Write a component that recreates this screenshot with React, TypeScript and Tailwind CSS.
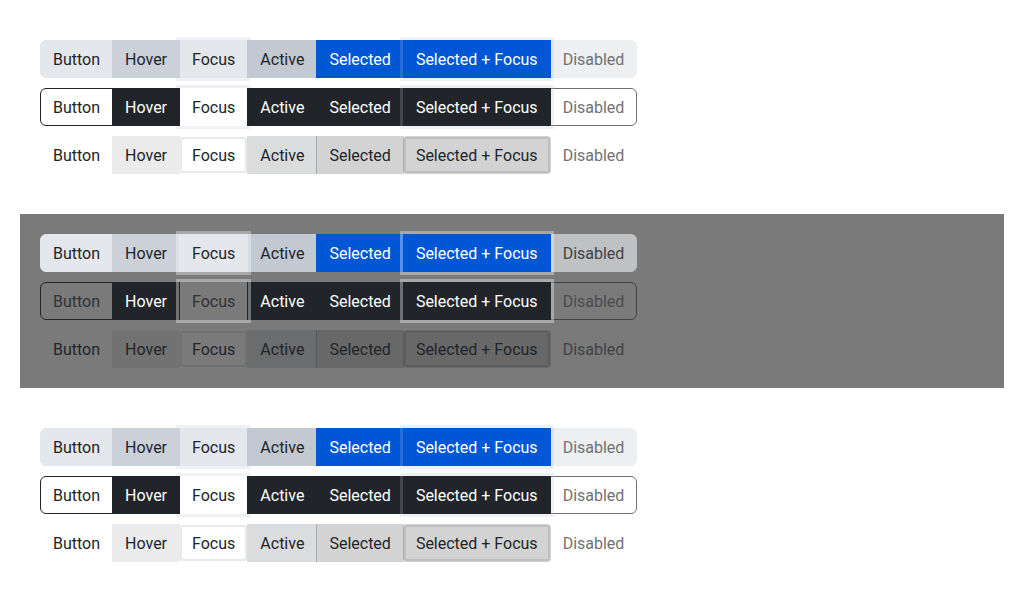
import React from 'react'

type Tone = 'light' | 'dark'

const labels = ['Button', 'Hover', 'Focus', 'Active', 'Selected', 'Selected + Focus', 'Disabled']

const base = 'border px-3 pt-[7px] pb-[5px] text-base leading-6 whitespace-nowrap -ml-px first:ml-0'

// filled row
const filled: Record<Tone, string[]> = {
  light: [
    'relative bg-[#e4e7eb] border-[#e4e7eb] text-[#212529] rounded-l-md',
    'relative bg-[#cbd0d9] border-[#cbd0d9] text-[#212529]',
    'bg-[#e4e7eb] border-[#e4e7eb] text-[#212529] shadow-[0_0_0_3px_rgba(180,190,205,0.22)]',
    'relative bg-[#c3c9d2] border-[#c3c9d2] text-[#212529]',
    'relative bg-[#0057d6] border-[#0057d6] text-white',
    'relative z-10 bg-[#0057d6] border-[#0057d6] text-white shadow-[0_0_0_3px_rgba(180,190,205,0.22)]',
    'relative bg-[#e4e7eb] border-[#e4e7eb] text-[#212529] opacity-65 rounded-r-md',
  ],
  dark: [
    'relative bg-[#e4e7eb] border-[#e4e7eb] text-[#212529] rounded-l-md',
    'relative bg-[#cbd0d9] border-[#cbd0d9] text-[#212529]',
    'relative z-10 bg-[#e4e7eb] border-[#e4e7eb] text-[#212529] shadow-[0_0_0_3px_rgba(255,255,255,0.35)]',
    'relative bg-[#c3c9d2] border-[#c3c9d2] text-[#212529]',
    'relative bg-[#0057d6] border-[#0057d6] text-white',
    'relative z-10 bg-[#0057d6] border-[#0057d6] text-white shadow-[0_0_0_3px_rgba(255,255,255,0.35)]',
    'relative bg-[#e4e7eb] border-[#e4e7eb] text-[#212529] opacity-65 rounded-r-md',
  ],
}

// outlined row
const outlined: Record<Tone, string[]> = {
  light: [
    'relative bg-transparent border-[#212529] text-[#212529] rounded-l-md',
    'relative bg-[#212529] border-[#212529] text-white',
    'bg-transparent border-transparent text-[#212529] shadow-[0_0_0_3px_rgba(180,190,205,0.22)]',
    'relative bg-[#212529] border-[#212529] text-white',
    'relative bg-[#212529] border-[#212529] text-white',
    'relative z-10 bg-[#212529] border-[#212529] text-white shadow-[0_0_0_3px_rgba(180,190,205,0.22)]',
    'relative bg-transparent border-[#212529] text-[#212529] opacity-65 rounded-r-md',
  ],
  dark: [
    'relative bg-transparent border-[#212529] text-[#303337] rounded-l-md',
    'relative bg-[#212529] border-[#212529] text-white',
    'relative z-10 bg-transparent border-transparent text-[#303337] shadow-[0_0_0_3px_rgba(255,255,255,0.35)]',
    'relative bg-[#212529] border-[#212529] text-white',
    'relative bg-[#212529] border-[#212529] text-white',
    'relative z-10 bg-[#212529] border-[#212529] text-white shadow-[0_0_0_3px_rgba(255,255,255,0.35)]',
    'relative bg-transparent border-[#212529] text-[#303337] opacity-65 rounded-r-md',
  ],
}

// ghost row
const ghost: string[] = [
  'relative bg-transparent border-transparent text-[#212529]',
  'relative bg-[rgba(33,37,41,0.09)] border-transparent text-[#212529]',
  'relative bg-transparent border-transparent text-[#212529] rounded-[4px] shadow-[inset_0_0_0_2px_rgba(33,37,41,0.1)]',
  'relative bg-[rgba(33,37,41,0.16)] border-transparent text-[#212529]',
  'relative bg-[rgba(33,37,41,0.2)] border-transparent border-l-[rgba(33,37,41,0.08)] text-[#212529]',
  'relative bg-[rgba(33,37,41,0.2)] border-transparent text-[#212529] rounded-[4px] shadow-[inset_0_0_0_2px_rgba(0,0,0,0.1)]',
  'relative bg-transparent border-transparent text-[#212529] opacity-65',
]

function Group({ styles }: { styles: string[] }) {
  return (
    <div className="flex">
      {labels.map((label, i) => (
        <button key={label} className={`${base} ${styles[i]}`}>
          {label}
        </button>
      ))}
    </div>
  )
}

function Section({ tone }: { tone: Tone }) {
  return (
    <div className={`flex flex-col gap-[10px] p-5 ${tone === 'dark' ? 'bg-[#7a7a7a]' : 'bg-white'}`}>
      <Group styles={filled[tone]} />
      <Group styles={outlined[tone]} />
      <Group styles={ghost} />
    </div>
  )
}

export default function App() {
  return (
    <div className="min-h-screen bg-white p-5 flex flex-col gap-5 font-['Roboto',sans-serif]">
      <Section tone="light" />
      <Section tone="dark" />
      <Section tone="light" />
    </div>
  )
}
